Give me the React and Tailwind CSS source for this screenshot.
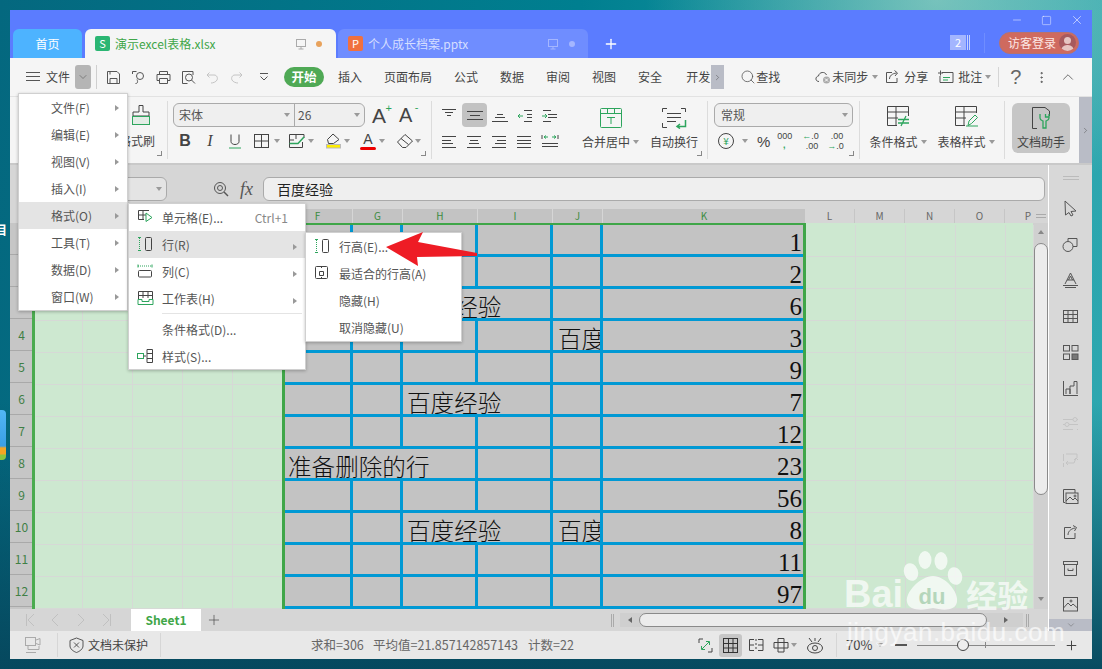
import React from 'react';
import { Search, ChevronUp, ChevronDown, ChevronRight, Plus, Minus, X, Square, EllipsisVertical } from 'lucide-react';

const Ic = ({ w = 16, h = 16, className = '', children }) => (
  <svg width={w} height={h} viewBox={`0 0 ${w} ${h}`} fill="none" stroke="currentColor" strokeWidth="1" className={`shrink-0 ${className}`}>
    {children}
  </svg>
);

const Caret = () => <span className="inline-block w-0 h-0 border-x-[3px] border-x-transparent border-t-[4px] border-t-[#9a9a9a]" />;
const SubArrow = () => <span className="inline-block w-0 h-0 border-y-[3px] border-y-transparent border-l-[4px] border-l-[#999]" />;
const Launcher = ({ className }) => <span className={`absolute w-[5px] h-[5px] border-r border-b border-[#888] ${className}`} />;

const Lines = ({ rows }) => (
  <Ic w={18} h={16} className="text-[#444]">
    {rows.map(([x1, x2, y]) => <path key={y} d={`M${x1} ${y}.5H${x2}`} />)}
  </Ic>
);

const alignIcons = [
  [[1, 15, 2], [4, 12, 5], [6, 10, 8]],
  [[1, 17, 4], [4, 14, 8], [1, 17, 12]],
  [[6, 12, 7], [4, 14, 10], [1, 17, 14]],
  null,
  null,
  [[1, 15, 3], [1, 10, 7], [1, 12, 10], [1, 15, 14]],
  [[1, 15, 3], [4, 12, 7], [3, 13, 10], [1, 15, 14]],
  [[1, 15, 3], [6, 15, 7], [4, 15, 10], [1, 15, 14]],
  [[1, 15, 3], [1, 15, 7], [1, 15, 10], [1, 15, 14]],
  null,
];

function AlignCell({ index }) {
  const rows = alignIcons[index];
  if (rows) {
    return (
      <div className={`w-[25px] h-[24px] flex items-center justify-center rounded-sm ${index === 1 ? 'bg-[#c2c2c2]' : ''}`}>
        <Lines rows={rows} />
      </div>
    );
  }
  return (
    <div className="w-[25px] h-[24px] flex items-center justify-center">
      <Ic w={18} h={16} className="text-[#444]">
        {index === 3 && <><path d="M8 3.5H16M11 7.5H16M11 10.5H16M8 14.5H16" /><path d="M7 9H2M4 7L2 9L4 11" stroke="#2da55d" /></>}
        {index === 4 && <><path d="M2 3.5H10M7 7.5H16M7 10.5H16M2 14.5H10" /><path d="M1 9H6M4 7L6 9L4 11" stroke="#2da55d" /></>}
        {index === 9 && <><path d="M1 10.5H17M1 13.5H17" /><path d="M1 2V6M17 2V6" /><path d="M3 4H7M5 2.5L3 4L5 5.5M11 4H15M13 2.5L15 4L13 5.5" stroke="#2da55d" /></>}
      </Ic>
    </div>
  );
}

const navItems = ['插入', '页面布局', '公式', '数据', '审阅', '视图', '安全'];

const rowsData = [
  { k: 1 },
  { k: 2 },
  { h: '百度经验', k: 6 },
  { j: '百度', k: 3 },
  { k: 9 },
  { h: '百度经验', k: 7 },
  { k: 12 },
  { f: '准备删除的行', k: 23 },
  { k: 56 },
  { h: '百度经验', j: '百度', k: 8 },
  { k: 11 },
  { k: 97 },
];

const cellCls = 'h-[32px] bg-[#c3c3c3] border-r-[3px] border-b-[3px] border-[#0099d4] overflow-hidden whitespace-nowrap text-[23.6px] leading-[29px] text-[#111] font-light';
const greenCls = 'h-[32px] bg-[#cde8d0] border-r border-b border-[#d6d9d6]';

function SheetRow({ row }) {
  return (
    <>
      {[0, 1, 2, 3, 4].map((i) => <div key={`a${i}`} className={greenCls} />)}
      {row.f ? (
        <div className={`${cellCls} col-span-3 pl-[5px] pt-[3px]`}>{row.f}</div>
      ) : (
        <>
          <div className={cellCls} />
          <div className={cellCls} />
          {row.h ? (
            <div className={`${cellCls} col-span-2 pl-[4px] pt-[3px]`}>{row.h}</div>
          ) : (
            <>
              <div className={cellCls} />
              <div className={cellCls} />
            </>
          )}
        </>
      )}
      {row.f && <div className={cellCls} />}
      <div className={`${cellCls} pl-[5px] pt-[3px]`}>{row.j}</div>
      <div className={`${cellCls} text-right pr-[1px] pt-[3px] font-['Liberation_Serif',serif] text-[25px]`}>{row.k}</div>
      {[0, 1, 2, 3, 4].map((i) => <div key={`b${i}`} className={greenCls} />)}
    </>
  );
}

const sideIcons = [
  <><path d="M3 1L14 11L9 11.5L11 15L9 16L7 12.5L3.5 15Z" /></>,
  <><circle cx="6" cy="10.5" r="5" /><path d="M6 5V2.5H15V10.5H11" /></>,
  <><path d="M3 12L8.5 1L14 12M5 8H12M6.5 8L8.5 4L10.5 8" /><path d="M1 13.5H16M3 15.5H14" /></>,
  <><rect x="1.5" y="2.5" width="14" height="12" /><path d="M1.5 6.5H15.5M1.5 10.5H15.5M6 2.5V14.5M11 2.5V14.5" /></>,
  <><rect x="1.5" y="1.5" width="6" height="5.5" /><rect x="10" y="1.5" width="6" height="5.5" /><rect x="1.5" y="10" width="6" height="5.5" /><rect x="10" y="10" width="6" height="5.5" fill="#777" /></>,
  <><path d="M1.5 1V15.5H16" /><path d="M4 14V9H8V14M8 14V6H12V1.5H15V14" /></>,
  <><path d="M1 3.5H11M15 3.5H16M1 8.5H3M7 8.5H16M1 13.5H11M15 13.5H16" /><circle cx="13" cy="3.5" r="2" /><circle cx="5" cy="8.5" r="2" /></>,
  <><path d="M1.5 2V9M1.5 11V15M4 2H15M15 2V6M6 13L4 11L6 9M4 11H12L14 6M12 8L14 6L16 8" /></>,
  <><path d="M3 14.5H1.5V1.5H13V5" /><rect x="4" y="5" width="12" height="10.5" /><path d="M4 13L8 9L11 12L13 10L16 13" /><circle cx="13" cy="8" r="1" /></>,
  <><path d="M9 3.5H2.5V14.5H13V9" /><path d="M6 11C6 8 8 5 13 4M11 1.5L14.5 3.5L12.5 7" /></>,
  <><rect x="1.5" y="1.5" width="14" height="3" /><path d="M2.5 4.5V15.5H14.5V4.5" /><path d="M6 8.5V10.5H11V8.5" /></>,
  <><rect x="1.5" y="1.5" width="14" height="13.5" /><path d="M1.5 12L6 7L9 10L11 8L15.5 12" /><circle cx="9" cy="5" r="1" /></>,
];

function FileItem({ label, active }) {
  return (
    <div className={`h-[27px] flex items-center pl-[32px] pr-[8px] justify-between ${active ? 'bg-[#e4e4e4]' : ''}`}>
      <span>{label}</span>
      <SubArrow />
    </div>
  );
}

function SubItem({ icon, label, shortcut, arrow, active }) {
  return (
    <div className={`h-[27px] flex items-center relative pl-[33px] pr-[8px] ${active ? 'bg-[#e4e4e4]' : ''}`}>
      {icon && <span className="absolute left-[8px] top-[5px] text-[#444]">{icon}</span>}
      <span>{label}</span>
      {shortcut && <span className="ml-auto mr-[9px] text-[#888]">{shortcut}</span>}
      {arrow && <span className="ml-auto"><SubArrow /></span>}
    </div>
  );
}

const rowIcon = (
  <Ic w={16} h={16}>
    <path d="M2.5 2V14" stroke="#2da55d" strokeDasharray="1 1" />
    <path d="M1 1.5H4M1 14.5H4" stroke="#2da55d" />
    <rect x="8.5" y="1.5" width="6" height="13" rx="1" />
  </Ic>
);

export default function App() {
  return (
    <div className="relative w-[1102px] h-[669px] overflow-hidden pl-[10px] pt-[10px] text-[12px] text-[#555] font-['Noto_Sans_CJK_SC','Liberation_Sans',sans-serif] bg-[radial-gradient(ellipse_at_85%_0%,rgba(190,225,205,0.55),transparent_22%),linear-gradient(180deg,rgba(0,60,80,0)_60%,rgba(6,70,92,0.95)_100%),linear-gradient(95deg,#04687f_0%,#007f90_50%,#24a1aa_85%,#2fa8b0_100%)]">
      {/* desktop bits peeking out on the left */}
      <span className="absolute -left-[5px] top-[222px] text-[12px] leading-[16px] text-white font-bold">目</span>
      <div className="absolute left-0 top-[410px] w-[6px] h-[50px] rounded-r-sm bg-[linear-gradient(180deg,#52b6f5_0%,#3a9fe6_72%,#f5a623_76%,#f5a623_88%,#8cc63f_90%)]" />

      <div className="w-[1082px] h-[649px] flex flex-col">
        {/* title bar */}
        <div className="h-[48px] bg-[#5b7cff] flex justify-between shrink-0">
          <div className="flex items-end pl-[3px] self-end h-[29px]">
            <div className="w-[69px] h-[29px] rounded-t-md bg-[#4db3ff] text-white flex items-center justify-center text-[12px]">首页</div>
            <div className="ml-[3px] w-[251px] h-[29px] rounded-t-md bg-[#f5f5f5] flex items-center pl-[10px] text-[#3fa648]">
              <span className="w-[15px] h-[15px] rounded-[2px] bg-[#2bb673] text-white text-[11px] leading-[15px] text-center">S</span>
              <span className="ml-[5px] text-[12px]">演示excel表格.xlsx</span>
              <span className="ml-auto text-[#aaa]">
                <Ic w={12} h={12}><rect x="1.5" y="1.5" width="9" height="7" /><path d="M6 8.5V11M3.5 11H8.5" /></Ic>
              </span>
              <span className="ml-[9px] mr-[14px] w-[6px] h-[6px] rounded-full bg-[#e8a25c]" />
            </div>
            <div className="ml-[2px] w-[250px] h-[29px] rounded-t-md bg-[#6f8dff] flex items-center pl-[10px] text-[#d5deff]">
              <span className="w-[15px] h-[15px] rounded-[2px] bg-[#f0703f] text-white text-[11px] leading-[15px] text-center">P</span>
              <span className="ml-[5px] text-[12px]">个人成长档案.pptx</span>
              <span className="ml-auto text-[#a4b6ff]">
                <Ic w={12} h={12}><rect x="1.5" y="1.5" width="9" height="7" /><path d="M6 8.5V11M3.5 11H8.5" /></Ic>
              </span>
              <span className="ml-[10px] mr-[13px] w-[6px] h-[6px] rounded-full bg-[#a4b6ff]" />
            </div>
            <Plus size={16} strokeWidth={2} className="ml-[15px] mb-[6px] text-white" />
          </div>
          <div className="flex flex-col items-end pr-[13px]">
            <div className="h-[20px] flex items-center text-white mr-[-5px]">
              <Minus size={12} strokeWidth={1} />
              <Square size={11} strokeWidth={1} className="ml-[18px]" />
              <X size={14} strokeWidth={1} className="ml-[18px]" />
            </div>
            <div className="mt-[2px] h-[21px] flex items-center">
              <span className="w-[16px] h-[15px] bg-[#a3b5ff] text-white text-[11px] leading-[15px] text-center">2</span>
              <span className="ml-[1px] w-[3px] h-[15px] border-x border-[#c8d3ff]" />
              <span className="ml-[14px] mr-[14px] w-px h-[20px] bg-[#6f8dff]" />
              <div className="w-[80px] h-[22px] rounded-full bg-[#cf6a5f] border border-[#b7726f] flex items-center pl-[8px] text-[#fde8e4] text-[12px]">
                访客登录
                <span className="ml-auto mr-[2px] w-[17px] h-[17px] rounded-full bg-[#a75a5e] overflow-hidden flex flex-col items-center">
                  <span className="mt-[3px] w-[7px] h-[7px] rounded-full bg-[#e6c5c2]" />
                  <span className="mt-[1px] w-[13px] h-[6px] rounded-t-full bg-[#e6c5c2]" />
                </span>
              </div>
            </div>
          </div>
        </div>

        {/* menu bar */}
        <div className="h-[39px] bg-[#f5f5f5] border-b border-[#e2e2e2] flex items-center shrink-0 text-[12px] text-[#444]">
          <Ic w={14} h={12} className="ml-[16px] text-[#555]"><path d="M0 1.5H14M0 5.5H14M0 9.5H14" /></Ic>
          <span className="ml-[6px]">文件</span>
          <div className="ml-[5px] w-[16px] h-[24px] rounded-[3px] bg-[#b5b5b5] flex items-center justify-center"><ChevronDown size={12} strokeWidth={1} /></div>
          <span className="ml-[5px] w-px h-[24px] bg-[#cfcfcf]" />
          <Ic w={15} h={15} className="ml-[9px] text-[#555]"><path d="M1.500 1.500H11L13.500 4V13.500H1.500ZM4 13.500V8.500H11V13.500M4 1.500V4.500" /></Ic>
          <Ic w={15} h={15} className="ml-[10px] text-[#555]"><circle cx="9" cy="6" r="3.500" /><path d="M5.500 1.500H1.500M4.500 13.500C8 13.500 6 9.500 6 9.500M1.500 1.500V4" /></Ic>
          <Ic w={15} h={15} className="ml-[10px] text-[#555]"><path d="M3.500 4.500V1.500H11.500V4.500M3.500 10.500H1V4.500H14V10.500H11.500M3.500 8.500H11.500V13.500H3.500Z" /></Ic>
          <Ic w={15} h={15} className="ml-[10px] text-[#555]"><path d="M6.500 13.500H1.500V1.500H12V5" /><circle cx="8" cy="7.500" r="3.500" /><path d="M10.500 10L14 13.500" /></Ic>
          <Ic w={13} h={13} className="ml-[10px] text-[#c4c4c4]"><path d="M1 4H8C11 4 12 7 11 9C10 11 7 12 5 12M3.500 1.500L1 4L3.500 6.500" /></Ic>
          <Ic w={13} h={13} className="ml-[11px] text-[#c4c4c4]"><path d="M12 4H5C2 4 1 7 2 9C3 11 6 12 8 12M9.500 1.500L12 4L9.500 6.500" /></Ic>
          <Ic w={10} h={10} className="ml-[16px] text-[#555]"><path d="M1 1.500H9M1.500 4.500L5 8L8.500 4.500" /></Ic>
          <span className="ml-[15px] w-[40px] h-[20px] rounded-full bg-[#4fa955] text-white font-bold flex items-center justify-center text-[12.5px]">开始</span>
          <div className="ml-[14px] flex gap-[22px]">
            {navItems.map((n) => <span key={n}>{n}</span>)}
          </div>
          <span className="ml-[24px] w-[25px] whitespace-nowrap">开发</span>
          <div className="w-[13px] h-[24px] bg-[#b9bcc6] flex items-center justify-center"><ChevronRight size={9} strokeWidth={1.2} /></div>
          <Search size={16} strokeWidth={1.2} className="ml-[16px] text-[#555]" />
          <span>查找</span>
          <Ic w={16} h={14} className="ml-[35px] text-[#555]"><path d="M4 11.500C0 11.500 0 6.500 3.500 6C4 2 10 1 11.500 5" /><circle cx="11.500" cy="10" r="3.500" fill="#aaa" stroke="none" /><path d="M10 8.500L13 11.500M13 8.500L10 11.500" stroke="#fff" /></Ic>
          <span className="ml-[1px]">未同步</span>
          <span className="ml-[4px] flex"><Caret /></span>
          <Ic w={14} h={14} className="ml-[7px] text-[#555]"><path d="M7 2.500H1.500V12.500H12V8" /><path d="M4.500 9C4.500 6 7 3.500 11.500 3M9.500 0.500L12.500 3L10 6" /></Ic>
          <span className="ml-[5px]">分享</span>
          <Ic w={16} h={14} className="ml-[10px] text-[#555]"><path d="M4 2.500H15V12.500H2V6" /><path d="M0 3H5M2.500 0.500V5.500" /><path d="M5 7.500H12M5 10H10" stroke="#2da55d" /></Ic>
          <span className="ml-[4px]">批注</span>
          <span className="ml-[3px] flex"><Caret /></span>
          <span className="ml-[7px] w-px h-[20px] bg-[#d5d5d5]" />
          <span className="ml-[11px] text-[20px] leading-none text-[#666] font-['Liberation_Sans',sans-serif]">?</span>
          <EllipsisVertical size={15} strokeWidth={1.5} className="ml-[13px] text-[#555]" />
          <ChevronUp size={18} strokeWidth={1} className="ml-[10px] text-[#444]" />
        </div>

        {/* ribbon */}
        <div className="h-[68px] bg-[#f5f5f5] border-b-2 border-[#c9c9c9] flex shrink-0 text-[12px] text-[#444]">
          <div className="relative w-[158px] border-r border-[#dcdcdc] my-[4px] flex flex-col items-end pr-[12px]">
            <Ic w={20} h={22} className="mt-[3px] mr-[4px] text-[#444]">
              <path d="M8 1.500H12V8H18V12H2V8H8Z" />
              <rect x="1.500" y="12.500" width="17" height="8" fill="#e3ede6" stroke="#2da55d" />
            </Ic>
            <span className="mt-[7px] leading-[16px]">格式刷</span>
            <Launcher className="right-[5px] bottom-[3px]" />
          </div>

          <div className="relative w-[264px] border-r border-[#dcdcdc] my-[4px] pl-[5px] pt-[2px]">
            <div className="flex items-center h-[24px]">
              <div className="w-[192px] h-[24px] flex border border-[#aaa] rounded-md bg-[#efefef] text-[#555]">
                <div className="w-[121px] border-r border-[#aaa] flex items-center pl-[5px] pr-[4px] justify-between">宋体<Caret /></div>
                <div className="flex-1 flex items-center pl-[3px] pr-[4px] justify-between">26<Caret /></div>
              </div>
              <span className="ml-[7px] relative text-[21px] leading-none font-['Liberation_Sans',sans-serif] text-[#444]">A<span className="absolute -top-[2px] -right-[6px] text-[11px] leading-none text-[#2da55d]">+</span></span>
              <span className="ml-[13px] relative text-[20px] leading-none font-['Liberation_Sans',sans-serif] text-[#444]">A<span className="absolute -top-[3px] -right-[6px] text-[11px] leading-none text-[#2da55d]">-</span></span>
            </div>
            <div className="mt-[4px] h-[20px] flex items-center">
              <span className="w-[24px] text-center text-[16px] font-bold font-['Liberation_Sans',sans-serif] text-[#444]">B</span>
              <span className="w-[26px] text-center text-[16px] italic font-['Liberation_Serif',serif] text-[#444]">I</span>
              <Ic w={24} h={16} className="text-[#444]"><path d="M8 1.500V8.500C8 12.500 16 12.500 16 8.500V1.500" /><path d="M6 15H18" stroke="#2da55d" /></Ic>
              <Ic w={18} h={16} className="ml-[6px] text-[#444]"><rect x="1.500" y="1.500" width="14" height="13" /><path d="M8.500 1.500V14.500M1.500 8H15.500" /></Ic>
              <span className="ml-[3px] w-[8px] flex"><Caret /></span>
              <Ic w={18} h={16} className="ml-[6px] text-[#444]"><path d="M16 5V1.500H1.500V14.500H14.500V9M1.500 7H6M8 1.500V6" /><path d="M1.500 10.500H10L16 4" stroke="#2da55d" strokeWidth="1.500" /></Ic>
              <span className="ml-[2px] w-[8px] flex"><Caret /></span>
              <Ic w={18} h={16} className="ml-[9px] text-[#444]"><path d="M8 1L14 6.500L8.500 10.500H3.500L2.500 6.500Z" /><rect x="1.500" y="11.500" width="14" height="3.500" fill="#ffee00" stroke="#bbb" /></Ic>
              <span className="ml-[1px] w-[8px] flex"><Caret /></span>
              <div className="ml-[8px] w-[16px] h-[17px] relative flex justify-center">
                <span className="text-[14px] leading-[13px] font-['Liberation_Sans',sans-serif] text-[#444]">A</span>
                <span className="absolute bottom-0 left-0 w-full h-[3px] rounded-full bg-[#ee0000]" />
              </div>
              <span className="ml-[3px] w-[8px] flex"><Caret /></span>
              <Ic w={18} h={16} className="ml-[9px] text-[#444]"><path d="M1.500 9L9 1.500L16.500 8L10 14.500H6.500Z M5 5.500L12.500 11.500" /></Ic>
              <span className="ml-[1px] w-[8px] flex"><Caret /></span>
            </div>
            <Launcher className="right-[5px] bottom-[3px]" />
          </div>

          <div className="relative w-[276px] border-r border-[#dcdcdc] my-[4px] flex pl-[5px] pt-[2px]">
            <div className="w-[125px] grid grid-cols-5 content-start gap-y-[2px]">
              {[0, 1, 2, 3, 4, 5, 6, 7, 8, 9].map((i) => <AlignCell key={i} index={i} />)}
            </div>
            <div className="ml-[19px] w-[59px] flex flex-col items-center pt-[4px]">
              <Ic w={24} h={22} className="text-[#2da55d]"><rect x="1.500" y="1.500" width="21" height="19" rx="1" /><path d="M1.500 6.500H22.500M8.500 1.500V6.500M15.500 1.500V6.500M8 10.500H16M12 10.500V17" /></Ic>
              <span className="mt-[4px] leading-[18px] flex items-center gap-[3px] whitespace-nowrap">合并居中<Caret /></span>
            </div>
            <div className="ml-[10px] w-[48px] flex flex-col items-center pt-[4px]">
              <Ic w={26} h={22} className="text-[#444]">
                <path d="M6 1.500H1.500V5M20 1.500H24.500V5M1.500 16V20.500H6M6 6.500H20M6 10.500H20M6 14.500H15" />
                <path d="M24.500 13V19.500H16M19 17L16 19.500L19 21.500" stroke="#2da55d" strokeWidth="1.500" />
              </Ic>
              <span className="mt-[4px] leading-[18px] whitespace-nowrap">自动换行</span>
            </div>
            <Launcher className="right-[5px] bottom-[3px]" />
          </div>

          <div className="relative w-[152px] border-r border-[#dcdcdc] my-[4px] pl-[6px] pt-[2px]">
            <div className="w-[139px] h-[24px] border border-[#aaa] rounded-md bg-[#efefef] flex items-center justify-between pl-[6px] pr-[4px] text-[#555]">常规<Caret /></div>
            <div className="mt-[4px] h-[20px] flex items-center">
              <span className="ml-[4px] w-[16px] h-[16px] rounded-full border border-[#444] text-[10px] leading-[14px] text-center text-[#2da55d]">¥</span>
              <span className="ml-[8px] flex"><Caret /></span>
              <span className="ml-[9px] text-[15px] leading-none font-['Liberation_Sans',sans-serif] text-[#444]">%</span>
              <span className="ml-[7px] w-[14px] text-[9px] leading-[9px] text-center font-['Liberation_Sans',sans-serif] text-[#444]">000<br /><span className="text-[#2da55d] font-bold">,</span></span>
              <span className="ml-[11px] w-[16px] text-[9px] leading-[10px] text-right font-['Liberation_Sans',sans-serif] text-[#444]"><span className="text-[#2da55d]">←</span>.0<br />.00</span>
              <span className="ml-[9px] w-[16px] text-[9px] leading-[10px] text-right font-['Liberation_Sans',sans-serif] text-[#444]">.00<br /><span className="text-[#2da55d]">→</span>.0</span>
            </div>
            <Launcher className="right-[5px] bottom-[3px]" />
          </div>

          <div className="w-[145px] border-r border-[#dcdcdc] my-[4px] flex pl-[9px] pt-[4px]">
            <div className="w-[58px] flex flex-col items-center">
              <Ic w={24} h={22} className="text-[#444]"><path d="M22.500 11V1.500H1.500V20.500H11M1.500 7H22.500M1.500 13H12M10 1.500V20" /><path d="M12 14.500H23M12 18H23M20 11L15 21" stroke="#2da55d" strokeWidth="1.300" /></Ic>
              <span className="mt-[6px] leading-[18px] flex items-center gap-[3px] whitespace-nowrap">条件格式<Caret /></span>
            </div>
            <div className="ml-[10px] w-[58px] flex flex-col items-center">
              <Ic w={24} h={22} className="text-[#444]"><path d="M22.500 8V1.500H1.500V20.500H11M1.500 7H22.500M1.500 13H12M10 1.500V20" /><path d="M14 20.500L15 16L21 10L23.500 12.500L17.500 18.500ZM12 21H24" stroke="#2da55d" /></Ic>
              <span className="mt-[6px] leading-[18px] flex items-center gap-[3px] whitespace-nowrap">表格样式<Caret /></span>
            </div>
          </div>

          <div className="w-[74px] my-[4px] pl-[7px] pt-[2px]">
            <div className="w-[58px] h-[50px] rounded-md bg-[#c6c6c6] flex flex-col items-center pt-[3px]">
              <Ic w={20} h={24} className="text-[#444]">
                <path d="M6 22.500H1.500V1.500H14L18.500 5V10" />
                <path d="M10 8V12C10 14 12 14.500 13 15V22H16V15C17 14.500 19 14 19 12V8V11H15.500V8" stroke="#2da55d" strokeWidth="1.300" transform="translate(-1 0)" />
              </Ic>
              <span className="mt-[3px] leading-[18px] whitespace-nowrap">文档助手</span>
            </div>
          </div>

          <div className="w-[13px] h-[66px] bg-[#b9bcc6] flex items-center justify-center"><ChevronRight size={9} strokeWidth={1.2} /></div>
        </div>

        {/* work area */}
        <div className="flex h-[466px] shrink-0">
          <div className="w-[1038px] flex flex-col bg-[#d6d6d6]">
            <div className="h-[44px] flex items-start pt-[12px] shrink-0">
              <div className="ml-[20px] w-[137px] h-[24px] border border-[#aaa] rounded-md bg-[#e4e4e4] flex items-center justify-end pr-[4px]"><Caret /></div>
              <span className="ml-[46px] mt-[4px] text-[#555]">
                <Ic w={16} h={16}><circle cx="7" cy="7" r="5.500" /><circle cx="7" cy="7" r="2.500" /><path d="M11 11L15 15" strokeWidth="1.500" /></Ic>
              </span>
              <span className="ml-[11px] w-[23px] mt-[1px] text-[18px] leading-[22px] italic font-['Liberation_Serif',serif] text-[#555]">fx</span>
              <div className="w-[782px] h-[24px] border border-[#aaa] rounded-md bg-[#efefef] pl-[13px] text-[14px] leading-[22px] text-[#222]">百度经验</div>
            </div>

            <div className="h-[14px] flex shrink-0 text-[10px] leading-[14px] text-center text-[#3b8b3f]">
              <div className="w-[273px] bg-[#d6d6d6]" />
              <div className="w-[522px] flex bg-[#c3c3c3]">
                <span className="w-[70px] border-r border-[#d6d6d6]">F</span>
                <span className="w-[50px] border-r border-[#d6d6d6]">G</span>
                <span className="w-[75px] border-r border-[#d6d6d6]">H</span>
                <span className="w-[75px] border-r border-[#d6d6d6]">I</span>
                <span className="w-[50px] border-r border-[#d6d6d6]">J</span>
                <span className="w-[202px]">K</span>
              </div>
              <div className="flex text-[#666]">
                {['L', 'M', 'N', 'O'].map((c) => <span key={c} className="w-[50px] border-r border-[#c6c6c6]">{c}</span>)}
                <span className="w-[28px] overflow-hidden pr-[2px] text-right">P</span>
              </div>
              <div className="w-[15px] flex flex-col items-center justify-center gap-[2px]">
                <span className="w-[10px] h-px bg-[#aaa]" />
                <span className="w-[10px] h-px bg-[#aaa]" />
              </div>
            </div>

            <div className="relative h-[386px] flex overflow-hidden shrink-0">
              <div className="w-[23px] shrink-0 bg-[#c6c6c6]">
                {rowsData.map((r, i) => (
                  <div key={i} className="h-[32px] border-b border-[#a9a9a9] flex items-center justify-center text-[12px] text-[#3f7f45]">{i > 2 ? i + 1 : ''}</div>
                ))}
              </div>
              <div className="relative w-[1000px] shrink-0 bg-[#cde8d0] pt-[2px]">
                <div className="grid grid-cols-[repeat(5,50px)_70px_50px_75px_75px_50px_203px_repeat(4,50px)_28px] auto-rows-[32px]">
                  {rowsData.map((r, i) => <SheetRow key={i} row={r} />)}
                </div>
                <div className="absolute -left-[1px] top-0 bottom-0 w-[3px] bg-[#4aab4f]" />
                <div className="absolute left-[249px] -top-[1px] w-[524px] h-[387px] border-x-[3px] border-t-[3px] border-[#3fa648]" />
              </div>
              <div className="w-[15px] shrink-0 bg-[#d0d0d0] flex flex-col items-center">
                <span className="mt-[7px] w-0 h-0 border-x-[3px] border-x-transparent border-b-[4px] border-b-[#888]" />
                <div className="mt-[9px] w-[14px] h-[252px] rounded-full bg-[#ececec] border border-[#8a8a8a]" />
                <span className="mt-[102px] w-0 h-0 border-x-[3px] border-x-transparent border-t-[4px] border-t-[#888]" />
              </div>
            </div>

            <div className="h-[22px] flex items-center shrink-0">
              <div className="flex items-center text-[#c0c0c0]">
                <Ic w={10} h={14} className="ml-[15px]"><path d="M1.500 1V13M9 1L3 7L9 13" /></Ic>
                <Ic w={8} h={14} className="ml-[16px]"><path d="M7 1L1 7L7 13" /></Ic>
                <Ic w={8} h={14} className="ml-[18px]"><path d="M1 1L7 7L1 13" /></Ic>
                <Ic w={10} h={14} className="ml-[17px]"><path d="M8.500 1V13M1 1L7 7L1 13" /></Ic>
              </div>
              <div className="ml-[19px] w-[70px] h-[22px] bg-white text-[#3fa648] font-bold text-[12px] flex items-center justify-center">Sheet1</div>
              <Plus size={16} strokeWidth={1} className="ml-[5px] text-[#444]" />
              <span className="ml-[389px] w-[3px] h-[13px] border-x border-[#aaa]" />
              <div className="ml-[6px] w-[403px] h-[14px] bg-[#cfcfcf] flex items-center">
                <span className="ml-[8px] w-0 h-0 border-y-[3px] border-y-transparent border-r-[4px] border-r-[#666]" />
                <div className="ml-[7px] w-[348px] h-[14px] rounded-full bg-[#ececec] border border-[#8a8a8a]" />
                <span className="ml-[17px] w-0 h-0 border-y-[3px] border-y-transparent border-l-[4px] border-l-[#666]" />
              </div>
              <span className="ml-[3px] w-[3px] h-[13px] border-x border-[#aaa]" />
            </div>
          </div>

          <div className="w-[44px] border-l border-white bg-[#d8d8d8] flex flex-col text-[#555]">
            <div className="h-[25px] flex flex-col items-center pt-[11px] gap-[2px] shrink-0">
              <span className="w-[16px] h-px bg-[#bbb]" />
              <span className="w-[16px] h-px bg-[#bbb]" />
            </div>
            <div className="flex-1 overflow-hidden">
              {sideIcons.map((icon, i) => (
                <div key={i} className={`h-[36px] flex items-center justify-center ${i === 6 || i === 7 ? 'text-[#c4c4c4]' : ''}`}>
                  <Ic w={17} h={17}>{icon}</Ic>
                </div>
              ))}
            </div>
            <div className="relative h-[12px] bg-[#b9bcc6] flex items-center justify-center shrink-0"><ChevronDown size={10} strokeWidth={1} /></div>
          </div>
        </div>

        {/* status bar */}
        <div className="h-[28px] bg-[#e8e8e8] flex items-center shrink-0 text-[12.5px] text-[#666]">
          <Ic w={18} h={18} className="ml-[14px] text-[#aaa]"><rect x="1.500" y="1.500" width="10" height="8" /><path d="M12 4L16 2.500V9L12 7.500M4 10V13.500H15V10M2 16.500H12" /></Ic>
          <span className="ml-[15px] w-px h-[24px] bg-[#d6d6d6]" />
          <Ic w={15} h={16} className="ml-[11px] text-[#555]"><path d="M7.500 1L14 3.500V9C14 12 10.500 14.500 7.500 15.500C4.500 14.500 1 12 1 9V3.500Z" /><path d="M5 5.500L10 10.500M10 5.500L5 10.500" /></Ic>
          <span className="ml-[4px] w-[60px] text-[12px] text-[#444]">文档未保护</span>
          <span className="ml-[12px] w-px h-[24px] bg-[#d6d6d6]" />
          <span className="ml-[150px] w-[54px] whitespace-nowrap">求和=306</span>
          <span className="ml-[8px] w-[146px] whitespace-nowrap">平均值=21.857142857143</span>
          <span className="ml-[9px] w-[47px] whitespace-nowrap">计数=22</span>
          <Ic w={15} h={15} className="ml-[123px] text-[#444]">
            <path d="M1 5V1H5M10 14H14V10" />
            <path d="M4 11L11 4M8 3.500H11.500V7M3.500 8V11.500H7" stroke="#2da55d" />
          </Ic>
          <div className="ml-[6px] w-[23px] h-[23px] rounded-[3px] bg-[#c6c6c6] flex items-center justify-center">
            <Ic w={15} h={15} className="text-[#333]"><rect x="0.500" y="0.500" width="14" height="14" /><path d="M0.500 5.500H14.500M0.500 10H14.500M5.500 0.500V14.500M10 0.500V14.500" /></Ic>
          </div>
          <Ic w={16} h={14} className="ml-[6px] text-[#444]"><path d="M6 1.500H1.500V12.500H6M10 1.500H15V12.500H10M1.500 7H6M10 7H15" /><path d="M8 1V13" strokeDasharray="2 2" /></Ic>
          <Ic w={16} h={16} className="ml-[9px] text-[#444]"><path d="M5 1.500H11V5.500H15V11H11V15H5V11H1V5.500H5ZM5 5.500H11V11H5Z" /></Ic>
          <span className="ml-[2px] flex"><Caret /></span>
          <Ic w={18} h={17} className="ml-[9px] text-[#444]"><ellipse cx="9" cy="11" rx="7.500" ry="5" /><circle cx="9" cy="11" r="2.500" /><path d="M3 1L6 5M15 1L12 5M9 1V4" /></Ic>
          <span className="ml-[12px] w-px h-[24px] bg-[#d6d6d6]" />
          <span className="ml-[9px] text-[13px] text-[#444]">70%</span>
          <span className="ml-[5px] flex"><Caret /></span>
          <span className="ml-[12px] w-[12px] h-[2px] bg-[#555]" />
          <div className="ml-[10px] relative w-[138px] h-px bg-[#888] flex items-center">
            <span className="absolute left-[40px] w-[12px] h-[12px] rounded-full border border-[#444] bg-[#eee]" />
            <span className="absolute left-[68px] w-px h-[6px] bg-[#888]" />
          </div>
          <Plus size={15} strokeWidth={1.6} className="ml-[9px] text-[#444]" />
        </div>
      </div>

      {/* file menu */}
      <div className="absolute left-[18px] top-[93px] w-[110px] bg-white border border-[#d0d0d0] shadow-[0_1px_3px_rgba(0,0,0,0.25)]">
        {['文件(F)', '编辑(E)', '视图(V)', '插入(I)'].map((m) => <FileItem key={m} label={m} />)}
        <FileItem label="格式(O)" active />
        {['工具(T)', '数据(D)', '窗口(W)'].map((m) => <FileItem key={m} label={m} />)}
      </div>

      <div className="absolute left-[128px] top-[203px] w-[178px] h-[167px] bg-white border border-[#d0d0d0] shadow-[0_1px_3px_rgba(0,0,0,0.25)]">
        <SubItem label="单元格(E)..." shortcut="Ctrl+1" icon={<Ic w={16} h={16}><path d="M12 1.500H1.500V10.500H7M1.500 6H9M6 1.500V10.500" /><path d="M9 4L15 8.500L9 12.500Z" stroke="#2da55d" /></Ic>} />
        <SubItem label="行(R)" arrow active icon={rowIcon} />
        <SubItem label="列(C)" arrow icon={<Ic w={16} h={16}><path d="M1 3H15" stroke="#2da55d" strokeDasharray="1 1" /><path d="M1 1.500V4.500M15 1.500V4.500" stroke="#2da55d" /><rect x="1.500" y="7.500" width="13" height="6.500" rx="1" /></Ic>} />
        <SubItem label="工作表(H)" arrow icon={<Ic w={17} h={16}><path d="M1.500 10V1.500H15.500V10M1.500 5.500H15.500M6 1.500V8M11 1.500V8" /><path d="M1 9.500H5V11.500H12V9.500H16V14.500H1Z" stroke="#2da55d" /></Ic>} />
        <div className="h-px bg-[#e4e4e4] ml-[33px] mr-[3px] mt-[1px]" />
        <div className="h-[2px]" />
        <SubItem label="条件格式(D)..." />
        <SubItem label="样式(S)..." icon={<Ic w={16} h={16}><rect x="0.500" y="5.500" width="6" height="5" stroke="#2da55d" /><path d="M6.500 8H9M10 1.500H15.500V14.500H10ZM10 5.500H15.500M10 10.500H15.500" /></Ic>} />
      </div>

      <div className="absolute left-[305px] top-[232px] w-[157px] h-[110px] bg-white border border-[#d0d0d0] shadow-[0_1px_3px_rgba(0,0,0,0.25)]">
        <SubItem label="行高(E)..." icon={rowIcon} />
        <SubItem label="最适合的行高(A)" icon={<Ic w={15} h={15}><rect x="1.500" y="1.500" width="12" height="12" rx="1" /><path d="M5.500 6.500H9.500V10.500H5.500ZM7.500 1.500V3M7.500 12V13.500" /></Ic>} />
        <SubItem label="隐藏(H)" />
        <SubItem label="取消隐藏(U)" />
      </div>

      {/* red arrow */}
      <svg className="absolute left-[380px] top-[226px]" width="104" height="46" viewBox="0 0 104 46">
        <polygon points="6,21 43,6 38,16 97,27 97,30 37,31 38,40" fill="#ee1c25" />
      </svg>

      {/* watermark */}
      <div className="absolute left-[844px] top-[550px] flex items-end text-white/70 pointer-events-none">
        <span className="text-[38px] leading-[40px] font-bold font-['Liberation_Sans',sans-serif]">Bai</span>
        <svg width="64" height="66" viewBox="0 0 64 66" className="-mb-[2px] -ml-[2px]">
          <g fill="#fff" fillOpacity="0.7">
            <ellipse cx="10" cy="22" rx="7" ry="9" transform="rotate(-20 10 22)" />
            <ellipse cx="24" cy="10" rx="6.500" ry="9" />
            <ellipse cx="40" cy="11" rx="6.500" ry="9" />
            <ellipse cx="54" cy="26" rx="7" ry="9" transform="rotate(-20 54 26)" />
            <path d="M32 26C44 26 58 42 56 52C54 62 40 60 32 58C24 60 8 62 6 52C4 42 20 26 32 26Z" />
          </g>
          <text x="31" y="54" textAnchor="middle" fontSize="22" fontWeight="700" fontFamily="Liberation Sans" fill="#b5d6bb">du</text>
        </svg>
        <span className="ml-[1px] text-[31px] leading-[40px] font-bold">经验</span>
      </div>
      <div className="absolute left-[847px] top-[617px] text-[26px] leading-[30px] text-white/65 tracking-[0.5px] font-['Liberation_Sans',sans-serif] pointer-events-none">jingyan.baidu.com</div>
    </div>
  );
}
